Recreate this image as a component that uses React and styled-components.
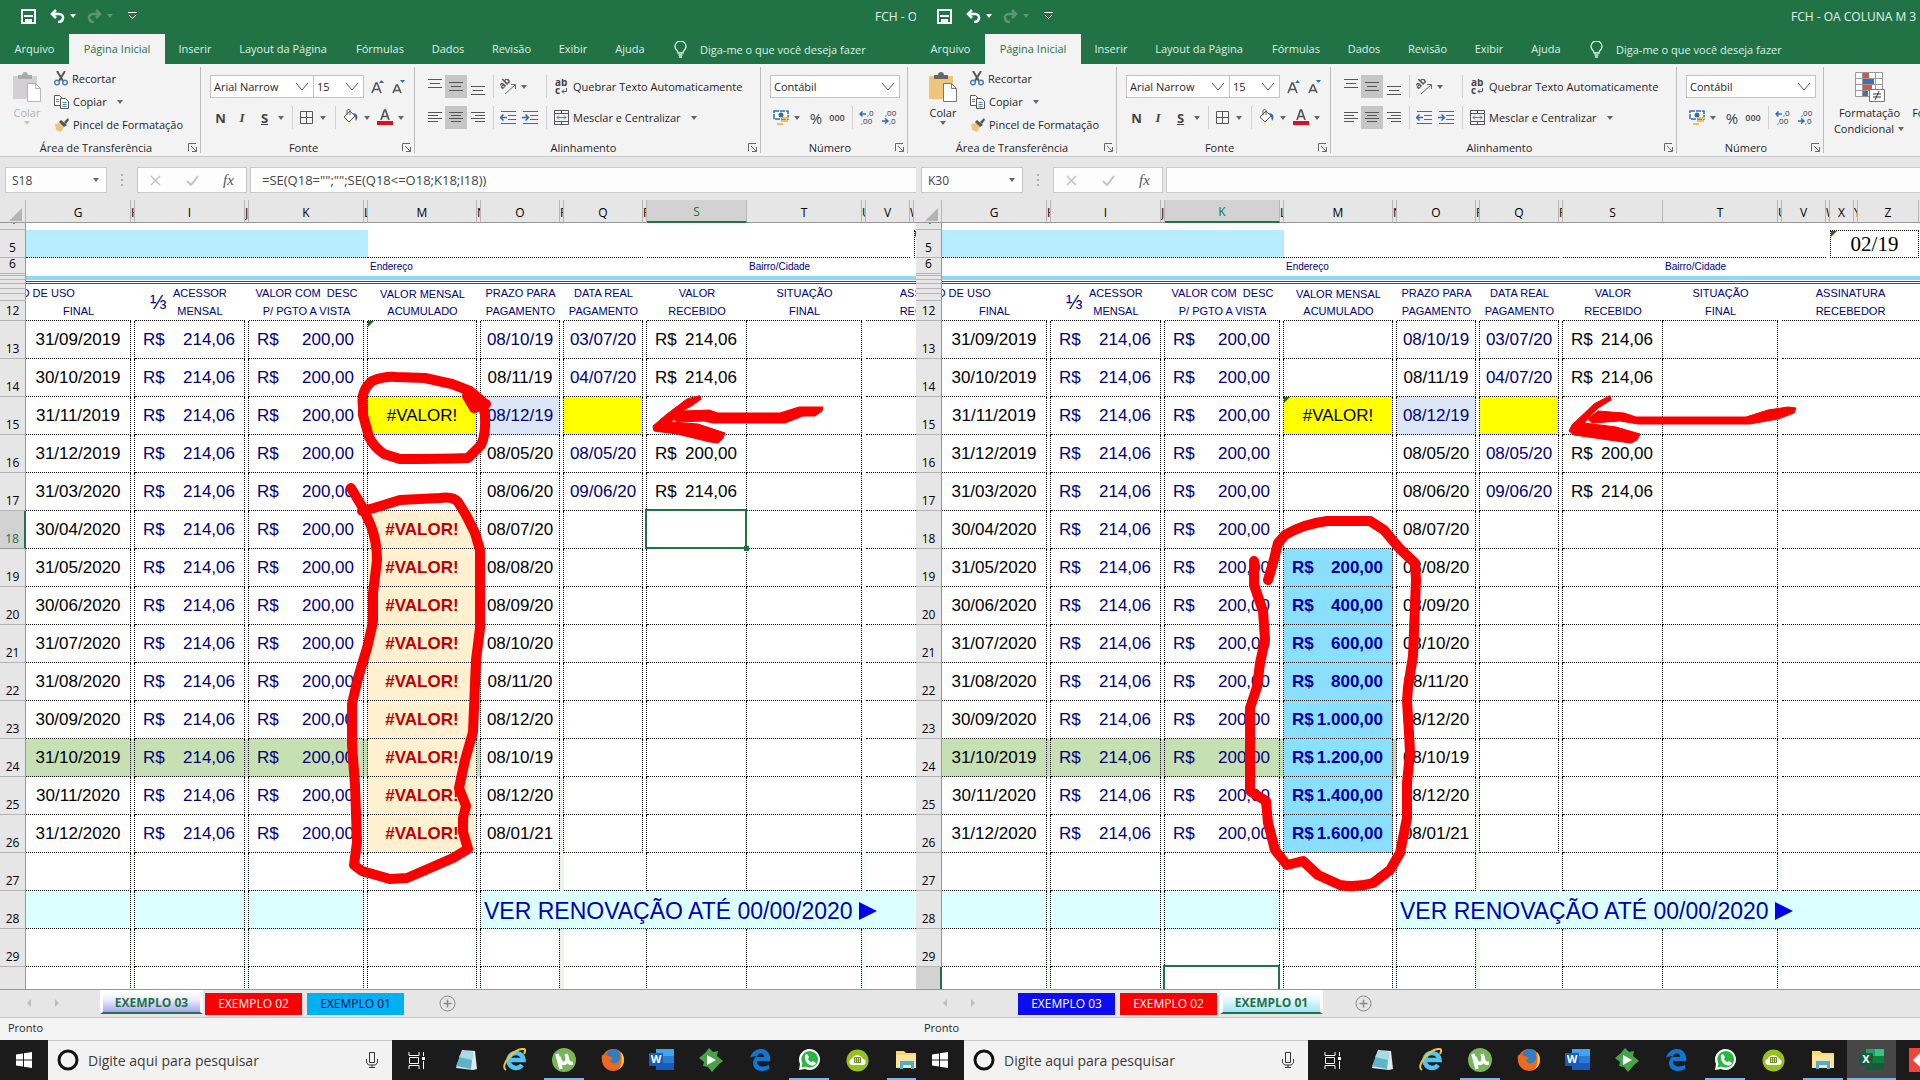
import React from 'react'
import styled, { createGlobalStyle, css } from 'styled-components'

const GlobalStyle = createGlobalStyle`
  * {
    box-sizing: border-box;
  }
  body {
    margin: 0;
    background: #e6e6e6;
    overflow: hidden;
  }
  button, input, select {
    font: inherit;
    color: inherit;
    margin: 0;
    padding: 0;
    border: 0;
    background: none;
    border-radius: 0;
  }
  svg {
    display: block;
    flex: none;
  }
`

const Desktop = styled.div`
  display: grid;
  grid-template-columns: minmax(0, 229fr) minmax(0, 251fr);
  min-height: 100vh;
  font-family: 'Open Sans', 'Noto Sans', sans-serif;
  font-size: 12px;
  color: #262626;
`
const Pane = styled.section`
  position: relative;
  display: flex;
  flex-direction: column;
  overflow: hidden;
  background: #e6e6e6;
`

/* title bar and ribbon tabs */
const TitleBar = styled.header`
  display: flex;
  align-items: center;
  height: 34px;
  padding-bottom: 2px;
  background: #217346;
  color: #e4f3e9;
  white-space: nowrap;
`
const QuickAccess = styled.div`
  display: flex;
  align-items: center;
  flex: none;
  width: 875px;
  padding-left: 21px;
`
const QuickButton = styled.button`
  display: flex;
  align-items: center;
  gap: 5px;
  margin-right: ${p => p.$gap || 10}px;
  opacity: ${p => (p.disabled ? 0.25 : 1)};
  color: #fff;
`
const TabStrip = styled.nav`
  display: flex;
  height: 30px;
  background: #217346;
  color: #dff0e6;
  font-size: 11px;
`
const RibbonTab = styled.button`
  flex: none;
  width: ${p => p.$w}px;
  padding-bottom: 1px;
  background: ${p => (p.$active ? '#f3f3f3' : 'transparent')};
  color: ${p => (p.$active ? '#217346' : '#dff0e6')};
  white-space: nowrap;
`
const TellMe = styled.button`
  display: flex;
  align-items: center;
  flex: none;
  gap: 13px;
  padding-left: 14px;
  color: #dff0e6;
  white-space: nowrap;
`

/* ribbon */
const Ribbon = styled.div`
  display: flex;
  flex: none;
  height: 93px;
  background: #f3f3f3;
  border-bottom: 1px solid #c8c8c8;
  font-size: 11px;
`
const Group = styled.div`
  display: flex;
  flex-direction: column;
  flex: none;
  width: ${p => p.$w}px;
  padding: ${p => (p.$tight ? '3px 0 0' : '11px 0 0 9px')};
  border-right: 1px solid transparent;
  border-image: linear-gradient(#f3f3f3 4px, #bcbcbc 4px, #bcbcbc 88px, #f3f3f3 88px) 1;
`
const GroupLabel = styled.div`
  display: flex;
  align-items: center;
  height: 18px;
  margin-top: auto;
  margin-left: ${p => (p.$tight ? 0 : -9)}px;
  span {
    flex: 1;
    padding-left: 4px;
    text-align: center;
  }
  button {
    margin-right: 3px;
  }
`
const ToolRow = styled.div`
  display: flex;
  align-items: center;
  height: 23px;
  margin-bottom: ${p => (p.$last ? 0 : 8)}px;
`
const Tool = styled.button`
  display: flex;
  align-items: center;
  justify-content: center;
  flex: none;
  width: ${p => p.$w}px;
  height: 23px;
  background: ${p => (p.$on ? '#c6c6c6' : 'transparent')};
  color: #444;
  white-space: nowrap;
`
const Glyph = styled.span`
  font-size: 13px;
  font-weight: 700;
  font-style: ${p => (p.$italic ? 'italic' : 'normal')};
  font-family: ${p => (p.$italic ? "'Liberation Serif', serif" : 'inherit')};
  text-decoration: ${p => (p.$under ? 'underline' : 'none')};
`
const Percent = styled.span`
  font-size: 15px;
`
const Zeros = styled.span`
  font-size: 9px;
  font-weight: 600;
`
const Sep = styled.span`
  display: flex;
  justify-content: center;
  flex: none;
  width: ${p => p.$w}px;
  height: 23px;
  &::before {
    content: '';
    width: 1px;
    background: #d0d0d0;
  }
`
const Space = styled.span`
  flex: none;
  width: ${p => p.$w}px;
`
const TextTool = styled.button`
  display: flex;
  align-items: center;
  gap: 10px;
  padding-left: 1px;
  white-space: nowrap;
`
const SelectBox = styled.label`
  display: grid;
  align-items: center;
  flex: none;
  width: ${p => p.$w}px;
  height: 23px;
  margin-right: ${p => (p.$join ? -1 : 0)}px;
  border: 1px solid #c3c3c3;
  background: #fff;
  select, svg {
    grid-area: 1 / 1;
  }
  select {
    appearance: none;
    width: 100%;
    padding-left: 3px;
  }
  svg {
    justify-self: end;
    margin-right: 3px;
    pointer-events: none;
  }
`
const Clipboard = styled.div`
  display: flex;
`
const BigTool = styled.button`
  display: flex;
  flex-direction: column;
  align-items: center;
  flex: none;
  width: ${p => p.$w}px;
  padding-top: 5px;
  line-height: 16px;
  color: ${p => (p.disabled ? '#b1b1b1' : '#262626')};
  white-space: nowrap;
  svg + span {
    margin-top: 3px;
  }
`
const BigLabel = styled.span`
  display: flex;
  align-items: center;
  gap: 4px;
`
const ClipList = styled.div`
  display: flex;
  flex-direction: column;
  align-items: flex-start;
`
const ClipTool = styled.button`
  display: flex;
  align-items: center;
  gap: 4px;
  height: 23px;
  white-space: nowrap;
`
const StylesGroup = styled.div`
  display: flex;
  padding-top: 3px;
`

/* formula bar */
const FormulaBar = styled.div`
  display: flex;
  flex: none;
  height: 43px;
  padding: 10px 0 7px 5px;
  color: #444;
`
const NameBox = styled.label`
  display: flex;
  align-items: center;
  flex: none;
  width: 102px;
  padding: 0 6px;
  border: 1px solid #c8c8c8;
  background: #fdfdfd;
  input {
    flex: 1;
    min-width: 0;
  }
`
const Dots = styled.span`
  display: flex;
  align-items: center;
  justify-content: center;
  flex: none;
  width: 30px;
`
const FormulaButtons = styled.div`
  display: flex;
  align-items: center;
  justify-content: space-around;
  flex: none;
  width: 110px;
  margin-right: 3px;
  border: 1px solid #c8c8c8;
  background: #fdfdfd;
`
const FormulaInput = styled.input`
  && {
    flex: 1;
    min-width: 0;
    padding-left: 11px;
    border: 1px solid #c8c8c8;
    border-right: 0;
    background: #fdfdfd;
    font-size: 13px;
  }
`
const Fx = styled.em`
  color: #555;
  font: italic 15px 'Liberation Serif', serif;
`

/* worksheet */
const Sheet = styled.div`
  position: relative;
  flex: 1 1 790px;
  overflow: hidden;
  border-bottom: 1px solid #979797;
  background: #fff;
`
const Grid = styled.table`
  width: 1024px;
  table-layout: fixed;
  border-collapse: separate;
  border-spacing: 0;
  font-family: 'Liberation Sans', Arial, sans-serif;
  font-size: 17px;
  line-height: 24px;
  color: #000;
`
const ColHead = styled.th`
  height: 23px;
  padding: 2px 0 0;
  overflow: hidden;
  border-bottom: ${p => (p.$on ? '2px solid #217346' : '1px solid #979797')};
  border-right: 1px solid #b5b5b5;
  background: ${p => (p.$on ? '#d2d2d2' : '#e6e6e6')};
  color: ${p => (p.$on ? '#217346' : '#000')};
  font: 400 12px/19px 'Open Sans', sans-serif;
  text-align: ${p => (p.$gap ? 'left' : 'center')};
  white-space: nowrap;
`
const RowHead = styled.th`
  padding: 0;
  border-bottom: 1px solid ${p => (p.$on ? '#979797' : '#b5b5b5')};
  border-right: ${p => (p.$on ? '2px solid #217346' : '1px solid #979797')};
  background: ${p => (p.$on ? '#d2d2d2' : '#e6e6e6')};
  color: ${p => (p.$on ? '#217346' : '#000')};
  font: 400 12px/18px 'Open Sans', sans-serif;
`
const RowNo = styled.div`
  display: flex;
  align-items: flex-end;
  justify-content: center;
  height: ${p => p.$h}px;
  overflow: hidden;
`
const dotted = '1px dotted #000'
const Cell = styled.td`
  position: relative;
  padding: 0;
  background: ${p => p.$bg || 'transparent'};
  color: ${p => p.$color || '#000'};
  font-weight: ${p => (p.$bold ? 700 : 400)};
  text-align: center;
  white-space: nowrap;
  border-right: ${p => (p.$r ? dotted : 0)};
  border-bottom: ${p => (p.$b ? dotted : 0)};
  ${p => p.$box && css`
    border: ${dotted};
    font: 21px/24px 'Liberation Serif', serif;
  `}
  ${p => p.$flag && css`
    &::before {
      content: '';
      position: absolute;
      top: 0;
      left: 0;
      border-top: 6px solid #1d6b1d;
      border-right: 6px solid transparent;
    }
  `}
  ${p => p.$selected && css`
    &::after {
      content: '';
      position: absolute;
      inset: -2px -1px ${p.$open ? '-30px' : '-1px'} -2px;
      border: 2px solid #217346;
      z-index: 1;
    }
  `}
`
const Handle = styled.i`
  position: absolute;
  right: -3px;
  bottom: -3px;
  z-index: 2;
  width: 5px;
  height: 5px;
  background: #217346;
`
const Money = styled.div`
  display: flex;
  justify-content: space-between;
  padding: 0 9px 0 8px;
`
const HeadCell = styled.td`
  padding: 0;
  overflow: hidden;
  border-bottom: ${p => (p.$b ? dotted : 0)};
  color: #00007c;
  font-size: 11px;
  line-height: ${p => (p.$low ? 17 : 18)}px;
  text-align: center;
  vertical-align: ${p => (p.$low ? 'bottom' : 'top')};
  white-space: pre;
`
const CutLine = styled.div`
  margin-left: -5px;
  text-align: left;
`
const Third = styled.div`
  display: grid;
  grid-template-columns: 30px 1fr;
  align-items: center;
  padding: 0 20px 0 8px;
  > span {
    font-size: 20px;
  }
`
const Note = styled.td`
  padding: 0 0 0 2px;
  color: #00007c;
  font-size: 10px;
  line-height: 15px;
  white-space: nowrap;
`
const Stripe = styled.td`
  padding: 0;
  background: ${p => (p.$blue ? '#8ed8f8' : '#fff')};
  border-bottom: ${p => (p.$red ? '3px double #b01c2e' : 0)};
`
const Renew = styled.a`
  display: flex;
  align-items: center;
  gap: 6px;
  padding: 2px 0 0 3px;
  color: #0000b4;
  font-size: 23px;
  line-height: 32px;
  text-decoration: none;
`
const Ink = styled.svg`
  position: absolute;
  top: 0;
  left: 0;
  z-index: 3;
  pointer-events: none;
`

/* sheet tabs, status, taskbar */
const SheetTabs = styled.div`
  display: flex;
  flex: none;
  height: 28px;
  border-bottom: 1px solid #c6c6c6;
`
const TabArrows = styled.div`
  display: flex;
  align-items: center;
  gap: 22px;
  flex: none;
  width: 100px;
  padding: 0 0 1px 26px;
  color: #bdbdbd;
`
const SheetTab = styled.button`
  flex: none;
  width: ${p => (p.$active ? 103 : 102)}px;
  height: 25px;
  padding-bottom: 1px;
  border: solid #e6e6e6;
  border-width: 3px 3px 0 2px;
  background: ${p => p.$bg};
  background-clip: padding-box;
  color: ${p => p.$color};
  ${p => p.$active && css`
    margin-top: -1px;
    border: solid #fff;
    border-width: 4px 3px 2px;
    border-bottom-color: #217346;
    font-weight: 700;
    background-clip: padding-box;
  `}
`
const AddSheet = styled.button`
  width: 16px;
  margin-left: 32px;
`
const StatusBar = styled.footer`
  flex: none;
  height: 22px;
  padding-left: 8px;
  background: #f3f3f3;
  font-size: 11px;
  line-height: 19px;
`
const Taskbar = styled.div`
  display: flex;
  flex: none;
  height: 40px;
  background: #1b1b1b;
`
const Start = styled.button`
  display: flex;
  align-items: center;
  justify-content: center;
  flex: none;
  width: 48px;
`
const Search = styled.label`
  display: flex;
  align-items: center;
  flex: none;
  width: 344px;
  padding: 0 14px 1px 9px;
  border-top: 1px solid #c8c8c8;
  background: #f2f2f2;
  color: #3b3b3b;
  font-size: 14px;
  input {
    flex: 1;
    min-width: 0;
    padding-left: 9px;
  }
  input::placeholder {
    color: #3b3b3b;
    opacity: 1;
  }
`
const AppButton = styled.button`
  display: flex;
  align-items: center;
  justify-content: center;
  flex: none;
  width: 49px;
  background: ${p => (p.$current ? '#474747' : 'transparent')};
  box-shadow: ${p => (p.$current ? 'inset 0 -2px #7eb4ea' : 'none')};
  ${p => p.$open && css`
    background: linear-gradient(#7eb4ea, #7eb4ea) center bottom / 40px 2px no-repeat;
  `}
`

const Caret = ({ color = '#666' }) => (
  <svg width="7" height="4"><path d="M0 0h6L3 4z" fill={color} /></svg>
)
const Chevron = () => (
  <svg width="15" height="9" fill="none" stroke="#555"><path d="M1 1l6 7 6-7" /></svg>
)
const Launcher = () => (
  <svg width="9" height="9" fill="none" stroke="#666">
    <path d="M.5 8V.5H8M3 3l5 5M8.500 4v4.500H4" />
  </svg>
)
const Lines = ({ rows }) => (
  <svg width="14" height="16" stroke="#555">
    {rows.map(([x, w, y]) => <path key={y} d={`M${x} ${y}.5h${w}`} />)}
  </svg>
)
const Indent = ({ flip }) => (
  <svg width="17" height="14" stroke="#666" fill="none">
    <path d="M1 .5h15M8 4.500h8M8 8.500h8M1 12.500h15" />
    <path
      d={flip ? 'M0 6.500h6M3.500 3.500l3 3-3 3' : 'M1 6.500h6M3.500 3.500l-3 3 3 3'}
      stroke="#2e6db4"
      strokeWidth="1.500"
    />
  </svg>
)
const PasteIcon = ({ off }) => (
  <svg width="29" height="30">
    <path d="M0 4h24v23H0z" fill={off ? '#d3d0d3' : '#efc57b'} />
    <path d="M5 7V3h4c0-4 6-4 6 0h4v4z" fill={off ? '#aaa' : '#666'} />
    <path d="M14.500 11.500h8l5 5v13h-13z" fill="#fff" stroke={off ? '#b5b5b5' : '#777'} />
    <path d="M22.500 11.500v5h5" fill="none" stroke={off ? '#b5b5b5' : '#777'} />
  </svg>
)
const CutIcon = () => (
  <svg width="14" height="15" fill="none" strokeWidth="1.500">
    <path d="M3 0l6 10M11 0L5 10" stroke="#555" strokeWidth="2" />
    <circle cx="3" cy="11.500" r="2.300" stroke="#4a7fbf" />
    <circle cx="11" cy="11.500" r="2.300" stroke="#4a7fbf" />
  </svg>
)
const CopyIcon = () => (
  <svg width="15" height="14" fill="#fff" stroke="#555">
    <path d="M.5.5h5l3 3v7h-8z" />
    <path d="M6.500 3.500h5l3 3v7h-8z" />
    <path d="M2 4.500h3M2 6.500h3M8.500 7.500h4M8.500 9.500h4M8.500 11.500h4" stroke="#4a7fbf" />
  </svg>
)
const BrushIcon = () => (
  <svg width="15" height="14">
    <path d="M1 6l5-1 4 4-3 5-5-2z" fill="#efc57b" />
    <path d="M5 4l2-2 6 5-3 2z" fill="#555" />
    <path d="M10 4l4-4 1 2-3 4z" fill="#555" />
  </svg>
)
const GrowFont = ({ down }) => (
  <svg width="14" height="14">
    <path
      d={down ? 'M1 13L4.500 5h1L9 13M2.500 10.500h5' : 'M1 13L5 3h1l4 10M2.500 9.500h6'}
      fill="none"
      stroke="#555"
      strokeWidth="1.600"
    />
    <path d={down ? 'M8 0h5l-2.500 3z' : 'M8 3h5L10.500 0z'} fill="#2e6db4" />
  </svg>
)
const BordersIcon = () => (
  <svg width="14" height="14" fill="none" stroke="#555"><path d="M.5.5h12v12H.5zM6.500 0v13M0 6.500h13" /></svg>
)
const BucketIcon = () => (
  <svg width="16" height="17">
    <path d="M1 8l6-6 5 5-6 6zM4 6V2c0-2 3-2 3 0v4" fill="#fff" stroke="#555" />
    <path d="M10 4c4 0 6 4 3 8-1-3 0-5-3-8z" fill="#2e6db4" />
    <path d="M1 14h12v3H1z" fill="#fdf3c4" />
  </svg>
)
const FontColorIcon = () => (
  <svg width="16" height="17">
    <path d="M4 11L7.500 1h1L12 11M5.500 7.500h5" fill="none" stroke="#555" strokeWidth="1.700" />
    <path d="M0 12h16v4H0z" fill="#d6121f" />
  </svg>
)
const AngleIcon = () => (
  <svg width="17" height="16">
    <text x="1" y="8" fontSize="10" fontWeight="700" fill="#555" transform="rotate(-45 5 8)">ab</text>
    <path d="M5 15l10-9M11 5.500h4.500V10" fill="none" stroke="#666" />
  </svg>
)
const WrapIcon = () => (
  <svg width="13" height="16" fill="#444">
    <text x="0" y="7" fontSize="10" fontWeight="700">ab</text>
    <text x="0" y="15" fontSize="10" fontWeight="700">c</text>
    <path d="M11.500 9v3.500H7M9 10.500l-2 2 2 2" fill="none" stroke="#555" />
  </svg>
)
const MergeIcon = () => (
  <svg width="15" height="15" fill="none" stroke="#555">
    <path d="M.5.5h14v14H.5zM0 3.500h15M0 11.500h15M7.500 0v3.500M7.500 11.500V15" />
    <path d="M3 7.500h9M5 5.500l-2 2 2 2M10 5.500l2 2-2 2" stroke="#4a7fbf" />
  </svg>
)
const CurrencyIcon = () => (
  <svg width="17" height="16">
    <path d="M1 1h14v8H1z" fill="#fff" stroke="#2e6db4" strokeWidth="1.500" strokeDasharray="5 1" />
    <circle cx="8" cy="5" r="2.500" fill="#2e6db4" />
    <path d="M9 7h7v2H9zM8 10h7v2H8zM4 13h6v2H4z" fill="#f0bd62" />
  </svg>
)
const DecimalIcon = ({ less }) => (
  <svg width="15" height="15" fill="#333">
    <text x={less ? 3 : 8} y="6" fontSize="8">{less ? ',00' : ',0'}</text>
    <text x={less ? 7 : 2} y="14" fontSize="8">{less ? ',0' : ',00'}</text>
    <path
      d={less ? 'M0 11h6M3 8.500L6 11l-3 2.500' : 'M1 4h6M3.500 1.500L1 4l2.500 2.500'}
      fill="none"
      stroke="#2e6db4"
      strokeWidth="1.500"
    />
  </svg>
)
const CondIcon = () => (
  <svg width="30" height="30">
    <path d="M.5.5h27v24H.5z" fill="#fff" />
    <path d="M8 1h6v6H8zM8 13h9v6H8z" fill="#d65545" />
    <path d="M8 7h11v6H8zM8 19h5v6H8z" fill="#3f6fb5" />
    <path d="M.5.5h27v24H.5zM0 6.500h28M0 12.500h28M0 18.500h28M7.500 0v25M20.500 0v25" fill="none" stroke="#999" />
    <path d="M14.500 17.500h15v12h-15z" fill="#fff" stroke="#777" />
    <path d="M18 22h8M18 25h8M24 19l-4 9" stroke="#333" />
  </svg>
)

const Letter = ({ bg, children }) => (
  <svg width="25" height="24">
    <path d="M7 1h18v21H7z" fill={bg[0]} />
    <path d="M7 8h18v7H7z" fill={bg[1]} />
    <path d="M7 15h18v7H7z" fill={bg[2]} />
    {bg[3] && <path d="M16 1h9v7h-9z" fill={bg[3]} />}
    <rect x="0" y="5" width="14" height="13" rx="1" fill={bg[2]} />
    <text x="7" y="15" fontSize="11" fontWeight="700" fill="#fff" textAnchor="middle">{children}</text>
  </svg>
)

const apps = [
  { name: 'Visão de tarefas', icon: (
    <svg width="18" height="17" fill="none" stroke="#fff">
      <path d="M1 0v3.500h10V0M1 17v-3.500h10V17M1.500 5.500h9v6h-9zM15.500 0v4M15.500 9v8" />
      <path d="M14 5h3v3h-3z" fill="#fff" stroke="none" />
    </svg>
  ) },
  { name: 'Bloco de Notas', icon: (
    <svg width="24" height="24">
      <path d="M8 2l13 1 2 18-4 1-17-2z" fill="#dfe9ea" />
      <path d="M8 3l11 1-2 17-15-3z" fill="#5fb3c8" />
      <path d="M8 3l11 1-1 8L5 9z" fill="#a5dbe4" />
    </svg>
  ) },
  { name: 'Internet Explorer', icon: (
    <svg width="26" height="24" fill="none">
      <path d="M20 17a7.500 7.500 0 1 1 1.500-5H8" stroke="#54c3f1" strokeWidth="4.500" />
      <path d="M4 22C-3 18 12 0 22 1c2 1 1 3 0 5" stroke="#f3c433" strokeWidth="2" />
    </svg>
  ) },
  { name: 'uTorrent', open: true, icon: (
    <svg width="24" height="24">
      <circle cx="12" cy="12" r="12" fill="#78b558" />
      <path d="M5 6l4 15M7 9c2 9 9 8 8 0l-1-3M15 9c1 5 2 7 6 6" stroke="#fff" strokeWidth="3.500" fill="none" />
    </svg>
  ) },
  { name: 'Firefox', icon: (
    <svg width="24" height="24">
      <circle cx="12" cy="12" r="11" fill="#e9611d" />
      <circle cx="13" cy="9" r="8" fill="#2f7fc4" />
      <path d="M1 7c2 1 5 0 7 1l4 2-3 3c2 4 8 3 10-2 1-4-1-7-3-9 9 4 9 15 2 19-10 5-19-4-17-14z" fill="#ec6a1f" />
      <path d="M20 4c5 6 3 14-2 17 3-5 3-10 2-17z" fill="#fbc93c" />
    </svg>
  ) },
  { name: 'Word', icon: <Letter bg={['#41a5ee', '#2b7cd3', '#185abd']}>W</Letter> },
  { name: 'Reprodutor', icon: (
    <svg width="24" height="24">
      <path d="M10 0l4 4 5-1-1 5 6 5-5 4-6 7-4-5-5-1 1-4-5-4 6-5z" fill="#47a34a" />
      <path d="M8 7l9 5-9 5z" fill="#fff" />
    </svg>
  ) },
  { name: 'Edge', icon: (
    <svg width="22" height="22">
      <path d="M1 9C3 2 8 0 12 0c7 0 10 6 9 12H8c0 7 8 6 12 4v4c-7 4-16 2-16-6 0-3 2-6 4-7-4 0-6 1-7 2zm7-1h7c0-5-6-5-7 0z" fill="#0b78d6" />
    </svg>
  ) },
  { name: 'WhatsApp', open: true, icon: (
    <svg width="22" height="22">
      <path d="M1 21l1-6A10.500 10.500 0 1 1 7 20z" fill="#fff" />
      <path d="M3.500 18.500l1-4a8.300 8.300 0 1 1 3 3z" fill="#25b83f" />
      <path d="M7 6l2-1 2 3-1 2c1 2 2 3 4 3l1-1 3 2c-1 3-4 3-6 2-3-1-6-5-5-10z" fill="#fff" />
    </svg>
  ) },
  { name: 'Filmes', icon: (
    <svg width="23" height="23">
      <circle cx="11.500" cy="11.500" r="11" fill="#97c11f" />
      <path d="M6 16c-4-1-3-6 0-6 1-5 9-5 11 0 4 1 3 6 0 6z" fill="#fff" />
      <path d="M8.500 8.500h6v5h-6zM8 11h7M10.500 8v6M12.500 8v6" fill="none" stroke="#6b8e12" />
    </svg>
  ) },
  { name: 'Explorador de Arquivos', open: true, icon: (
    <svg width="22" height="20">
      <path d="M0 1h8l2 2h12v15H0z" fill="#f7d774" />
      <path d="M0 5h22v13H0z" fill="#fde69b" />
      <path d="M4 19v-8h14v8h-3v-4H7v4z" fill="#4badd8" />
    </svg>
  ) },
  { name: 'Excel', current: true, icon: <Letter bg={['#21a366', '#107c41', '#185c37', '#33c481']}>X</Letter> },
  { name: 'AnyDesk', icon: (
    <svg width="24" height="24">
      <path d="M0 0h24v24H0z" fill="#ef443b" />
      <path d="M4 12l7-7 7 7-7 7z" fill="#fff" />
    </svg>
  ) },
]

const ribbonTabs = [
  ['Arquivo', 69],
  ['Página Inicial', 96],
  ['Inserir', 60],
  ['Layout da Página', 116],
  ['Fórmulas', 78],
  ['Dados', 58],
  ['Revisão', 69],
  ['Exibir', 54],
  ['Ajuda', 60],
]

const columns = [
  ['G', 105], ['H', 4], ['I', 110], ['J', 4], ['K', 115], ['L', 4], ['M', 109],
  ['N', 4], ['O', 79], ['P', 4], ['Q', 79], ['R', 4], ['S', 100], ['T', 115],
  ['U', 4], ['V', 44], ['W', 4], ['X', 24], ['Y', 4], ['Z', 61], ['AA', 21],
]

const NAVY = '#00007c'
const GREEN = '#c6e0b4'
const AQUA = '#dcffff'

// [row, final date, deadline, real date, received]
const payments = [
  [13, '31/09/2019', '08/10/19', '03/07/20', '214,06'],
  [14, '30/10/2019', '08/11/19', '04/07/20', '214,06'],
  [15, '31/11/2019', '08/12/19', '', ''],
  [16, '31/12/2019', '08/05/20', '08/05/20', '200,00'],
  [17, '31/03/2020', '08/06/20', '09/06/20', '214,06'],
  [18, '30/04/2020', '08/07/20'],
  [19, '31/05/2020', '08/08/20'],
  [20, '30/06/2020', '08/09/20'],
  [21, '31/07/2020', '08/10/20'],
  [22, '31/08/2020', '08/11/20'],
  [23, '30/09/2020', '08/12/20'],
  [24, '31/10/2019', '08/10/19'],
  [25, '30/11/2020', '08/12/20'],
  [26, '31/12/2020', '08/01/21'],
]

const books = [
  {
    id: 'a',
    cell: 'S18',
    formula: '=SE(Q18="";"";SE(Q18<=O18;K18;I18))',
    pasteOff: true,
    flag: 13,
    accumulated: row => (row >= 18 ? '#VALOR!' : ''),
    tabs: [
      ['EXEMPLO 03', 'linear-gradient(#fff, #e9e9fc 40%, #a3a3f2)', '#217346', true],
      ['EXEMPLO 02', '#fb0000', '#fff'],
      ['EXEMPLO 01', '#00b0f0', '#00005a'],
    ],
  },
  {
    id: 'b',
    cell: 'K30',
    formula: '',
    flag: 15,
    accumulated: row => (row >= 19 ? ((row - 18) * 200).toLocaleString('de-DE') + ',00' : ''),
    tabs: [
      ['EXEMPLO 03', '#0c0cf0', '#fff'],
      ['EXEMPLO 02', '#fb0000', '#fff'],
      ['EXEMPLO 01', 'linear-gradient(#fff, #e2f7fd 40%, #9fe2f7)', '#217346', true],
    ],
  },
]

function RibbonBar({ book }) {
  const b = book.id
  return (
    <Ribbon>
      <Group $w={201} $tight>
        <Clipboard>
          <BigTool $w={54} disabled={book.pasteOff}>
            <PasteIcon off={book.pasteOff} />
            <BigLabel>Colar</BigLabel>
            <Caret color={book.pasteOff ? '#c5c5c5' : '#666'} />
          </BigTool>
          <ClipList>
            <ClipTool><CutIcon />Recortar</ClipTool>
            <ClipTool><CopyIcon />Copiar<Space $w={2} /><Caret /></ClipTool>
            <ClipTool><BrushIcon />Pincel de Formatação</ClipTool>
          </ClipList>
        </Clipboard>
        <GroupLabel $tight><span>Área de Transferência</span><button aria-label="Mais"><Launcher /></button></GroupLabel>
      </Group>
      <Group $w={214}>
        <ToolRow>
          <SelectBox $w={104} $join htmlFor={`font-${b}`}>
            <select id={`font-${b}`} aria-label="Fonte"><option>Arial Narrow</option></select>
            <Chevron />
          </SelectBox>
          <SelectBox $w={51} htmlFor={`size-${b}`}>
            <select id={`size-${b}`} aria-label="Tamanho"><option>15</option></select>
            <Chevron />
          </SelectBox>
          <Space $w={4} />
          <Tool $w={20}><GrowFont /></Tool>
          <Tool $w={22}><GrowFont down /></Tool>
        </ToolRow>
        <ToolRow $last>
          <Tool $w={21}><Glyph>N</Glyph></Tool>
          <Tool $w={22}><Glyph $italic>I</Glyph></Tool>
          <Tool $w={23}><Glyph $under>S</Glyph></Tool>
          <Tool $w={11}><Caret /></Tool>
          <Sep $w={10} />
          <Tool $w={20}><BordersIcon /></Tool>
          <Tool $w={13}><Caret /></Tool>
          <Sep $w={10} />
          <Tool $w={22}><BucketIcon /></Tool>
          <Tool $w={11}><Caret /></Tool>
          <Tool $w={24}><FontColorIcon /></Tool>
          <Tool $w={9}><Caret /></Tool>
        </ToolRow>
        <GroupLabel><span>Fonte</span><button aria-label="Mais"><Launcher /></button></GroupLabel>
      </Group>
      <Group $w={346}>
        <ToolRow>
          <Tool $w={21}><Lines rows={[[0, 14, 0], [2, 10, 4], [0, 14, 8]]} /></Tool>
          <Tool $w={22} $on><Lines rows={[[0, 14, 3], [2, 10, 7], [0, 14, 11]]} /></Tool>
          <Tool $w={22}><Lines rows={[[0, 14, 7], [2, 10, 11], [0, 14, 15]]} /></Tool>
          <Sep $w={8} />
          <Tool $w={22}><AngleIcon /></Tool>
          <Tool $w={10}><Caret /></Tool>
          <Space $w={12} />
          <Sep $w={10} />
          <Tool $w={21}><WrapIcon /></Tool>
          <TextTool>Quebrar Texto Automaticamente</TextTool>
        </ToolRow>
        <ToolRow $last>
          <Tool $w={21}><Lines rows={[[0, 14, 2], [0, 10, 5], [0, 14, 8], [0, 10, 11]]} /></Tool>
          <Tool $w={22} $on><Lines rows={[[0, 14, 2], [2, 10, 5], [0, 14, 8], [2, 10, 11]]} /></Tool>
          <Tool $w={22}><Lines rows={[[0, 14, 2], [4, 10, 5], [0, 14, 8], [4, 10, 11]]} /></Tool>
          <Sep $w={8} />
          <Tool $w={22}><Indent /></Tool>
          <Tool $w={22}><Indent flip /></Tool>
          <Sep $w={10} />
          <Tool $w={21}><MergeIcon /></Tool>
          <TextTool>Mesclar e Centralizar<Caret /></TextTool>
        </ToolRow>
        <GroupLabel><span>Alinhamento</span><button aria-label="Mais"><Launcher /></button></GroupLabel>
      </Group>
      <Group $w={147}>
        <ToolRow>
          <SelectBox $w={130} htmlFor={`format-${b}`}>
            <select id={`format-${b}`} aria-label="Formato"><option>Contábil</option></select>
            <Chevron />
          </SelectBox>
        </ToolRow>
        <ToolRow $last>
          <Tool $w={22}><CurrencyIcon /></Tool>
          <Tool $w={11}><Caret /></Tool>
          <Tool $w={26}><Percent>%</Percent></Tool>
          <Tool $w={16}><Zeros>000</Zeros></Tool>
          <Sep $w={14} />
          <Tool $w={15}><DecimalIcon /></Tool>
          <Space $w={8} />
          <Tool $w={15}><DecimalIcon less /></Tool>
        </ToolRow>
        <GroupLabel><span>Número</span><button aria-label="Mais"><Launcher /></button></GroupLabel>
      </Group>
      <StylesGroup>
        <BigTool $w={91}>
          <CondIcon />
          <BigLabel>Formatação</BigLabel>
          <BigLabel>Condicional<Caret /></BigLabel>
        </BigTool>
        <BigTool $w={42}>
          <CondIcon />
          <BigLabel>Formatar</BigLabel>
        </BigTool>
      </StylesGroup>
    </Ribbon>
  )
}

const amount = value => <Money><span>R$</span><span>{value}</span></Money>

function PaymentRow({ book, data }) {
  const [row, end, due, paid, received] = data
  const band = row === 24 ? GREEN : undefined
  const late = row === 15
  const total = book.accumulated(row)
  const isError = total === '#VALOR!'
  const selected = book.cell === `S${row}`
  let totalBg
  if (late) totalBg = '#ffff00'
  else if (total) totalBg = isError ? '#fff0cf' : '#8adfff'
  const tint = row > 24 ? '#edf3e8' : undefined
  return (
    <tr>
      <RowHead $on={selected}><RowNo $h={37}>{row}</RowNo></RowHead>
      <Cell $r $b $bg={band}>{end}</Cell>
      <Cell $r $bg={band} />
      <Cell $r $b $bg={band} $color={NAVY}>{amount('214,06')}</Cell>
      <Cell $r $bg={band} />
      <Cell $r $b $bg={band} $color={NAVY}>{amount('200,00')}</Cell>
      <Cell $r $bg={band} />
      <Cell
        $r
        $b
        $bg={totalBg}
        $bold={Boolean(total)}
        $color={isError ? '#c00000' : total ? '#0000a8' : '#000'}
        $flag={book.flag === row}
      >
        {late ? '#VALOR!' : isError ? total : total && amount(total)}
      </Cell>
      <Cell $r $bg={band} />
      <Cell $r $b $bg={late ? '#dbe7f6' : undefined} $color={row === 13 || late ? NAVY : '#000'}>{due}</Cell>
      <Cell $r $bg={tint} />
      <Cell $r $b $bg={late ? '#ffff00' : undefined} $color={NAVY}>{paid}</Cell>
      <Cell $r />
      <Cell $r $b $selected={selected}>
        {received && amount(received)}
        {selected && <Handle />}
      </Cell>
      <Cell $r $b />
      <Cell />
      <Cell $b colSpan={6} />
    </tr>
  )
}

function BlankRow({ book, row, height = 37 }) {
  const selected = book.cell === `K${row}`
  const open = row === 30
  return (
    <tr>
      <RowHead $on={selected}><RowNo $h={height}>{open ? '' : row}</RowNo></RowHead>
      <Cell $r $b />
      <Cell $r $bg="#f1f8ea" />
      <Cell $r $b />
      <Cell $r $bg="#e8fcfc" />
      <Cell $r $b $selected={selected} $open />
      <Cell $r />
      <Cell $r $b />
      <Cell $r $bg="#e8fcfc" />
      <Cell $r $b />
      <Cell $bg="#edf3e8" />
      <Cell $b />
      <Cell $r />
      <Cell $r $b />
      <Cell $r $b />
      <Cell $bg="#f2fdfb" />
      <Cell $b colSpan={6} />
    </tr>
  )
}

function Worksheet({ book }) {
  const onCol = book.cell[0]
  return (
    <Grid>
      <colgroup>
        <col width="26" />
        {columns.map(([name, w]) => <col key={name} width={w} />)}
      </colgroup>
      <thead>
        <tr>
          <ColHead>
            <svg width="25" height="19"><path d="M22 5v13H9z" fill="#b4b4b4" /></svg>
          </ColHead>
          {columns.map(([name, w]) => (
            <ColHead key={name} $on={name === onCol} $gap={w < 5}>{name}</ColHead>
          ))}
        </tr>
      </thead>
      <tbody>
        <tr>
          <RowHead><RowNo $h={6}>4</RowNo></RowHead>
          <Cell colSpan={21} />
        </tr>
        <tr>
          <RowHead><RowNo $h={27}>5</RowNo></RowHead>
          <Cell $b colSpan={6} $bg="#b7ecfe" />
          <Cell $b colSpan={5} />
          <Cell />
          <Cell $b colSpan={4} />
          <Cell />
          <Cell $box $flag colSpan={3}>02/19</Cell>
          <Cell />
        </tr>
        <tr>
          <RowHead><RowNo $h={15}>6</RowNo></RowHead>
          <Note colSpan={6} />
          <Note colSpan={7}>Endereço</Note>
          <Note colSpan={8}>Bairro/Cidade</Note>
        </tr>
        <tr>
          <RowHead><RowNo $h={1} /></RowHead>
          <Stripe colSpan={21} />
        </tr>
        <tr>
          <RowHead><RowNo $h={3} /></RowHead>
          <Stripe $blue colSpan={21} />
        </tr>
        <tr>
          <RowHead><RowNo $h={3} /></RowHead>
          <Stripe $red colSpan={21} />
        </tr>
        <tr>
          <RowHead><RowNo $h={4} /></RowHead>
          <HeadCell $b rowSpan={4}><CutLine>O DE USO</CutLine>FINAL</HeadCell>
          <HeadCell rowSpan={4} />
          <HeadCell $b rowSpan={4}>
            <Third><span>⅓</span><div>ACESSOR<br />MENSAL</div></Third>
          </HeadCell>
          <HeadCell rowSpan={4} />
          <HeadCell $b rowSpan={4}>VALOR COM  DESC<br />P/ PGTO A VISTA</HeadCell>
          <HeadCell rowSpan={4} />
          <HeadCell $b $low rowSpan={4}>VALOR MENSAL<br />ACUMULADO</HeadCell>
          <HeadCell rowSpan={4} />
          <HeadCell $b rowSpan={4}>PRAZO PARA<br />PAGAMENTO</HeadCell>
          <HeadCell rowSpan={4} />
          <HeadCell $b rowSpan={4}>DATA REAL<br />PAGAMENTO</HeadCell>
          <HeadCell rowSpan={4} />
          <HeadCell $b rowSpan={4}>VALOR<br />RECEBIDO</HeadCell>
          <HeadCell $b rowSpan={4}>SITUAÇÃO<br />FINAL</HeadCell>
          <HeadCell rowSpan={4} />
          <HeadCell $b rowSpan={4} colSpan={5}>ASSINATURA<br />RECEBEDOR</HeadCell>
          <HeadCell rowSpan={4} />
        </tr>
        <tr><RowHead><RowNo $h={4} /></RowHead></tr>
        <tr><RowHead><RowNo $h={6} /></RowHead></tr>
        <tr><RowHead><RowNo $h={19}>12</RowNo></RowHead></tr>
        {payments.map(data => <PaymentRow key={data[0]} book={book} data={data} />)}
        <BlankRow book={book} row={27} />
        <tr>
          <RowHead><RowNo $h={37}>28</RowNo></RowHead>
          <Cell $r $b $bg={AQUA} />
          <Cell $r $bg={AQUA} />
          <Cell $r $b $bg={AQUA} />
          <Cell $r $bg={AQUA} />
          <Cell $r $b $bg={AQUA} />
          <Cell $r />
          <Cell $r $b />
          <Cell $r />
          <Cell $b $bg={AQUA} colSpan={13}>
            <Renew href="#renovacao">
              VER RENOVAÇÃO ATÉ 00/00/2020
              <svg width="19" height="18"><path d="M0 0v18l18-9z" fill="#0000f0" /></svg>
            </Renew>
          </Cell>
        </tr>
        <BlankRow book={book} row={29} />
        <BlankRow book={book} row={30} height={38} />
      </tbody>
    </Grid>
  )
}

// hand drawn marks, in worksheet pixels
const InkA = () => (
  <Ink width="916" height="790" fill="none" stroke="#fb0000" strokeWidth="10" strokeLinejoin="round" strokeLinecap="round">
    <path d="M363 206C361 195 364 188 372 181Q384 176 396 177L425 178L452 184L470 191L482 201L485 215Q486 235 481 245L468 258Q440 259 400 259L384 254Q374 247 369 237L363 215Z" />
    <path d="M467 196L486 204L474 208z" />
    <path d="M351 288L363 308L371 326Q377 342 377 360L373 393V422L367 448L358 478L352 504V545L355 585L357 642L354 665L362 671L390 679L407 678L437 665L453 658L468 649L463 632V618L466 606L459 588L465 560L473 532L476 460L480 428V350L475 333L466 315L458 302Q453 296 440 298L400 300L374 308L362 311" />
    <path
      transform="translate(0 23)"
      fill="#fb0000"
      strokeWidth="1"
      d="M674 196L683 188L709 187L718 190H780L799 184H823L822 188L815 193H803L785 200H713L704 198L677 199ZM700 173L701 176L693 182L684 187L671 199L698 201L725 210L723 215L718 220L710 219L677 211L654 208L653 203L667 191L687 176Z"
    />
  </Ink>
)
const InkB = () => (
  <Ink width="1004" height="790" fill="none" stroke="#fb0000" strokeWidth="10" strokeLinejoin="round" strokeLinecap="round">
    <g transform="translate(0 23)">
      <path d="M352 357L357 340L362 320L369 312Q387 301 411 298H454L468 307L484 326L499 340L500 357L497 433L492 464L491 478L493 510L494 530L491 560V595L484 630L474 647L457 660Q440 665 424 662L402 652L387 638L371 642L359 627L352 600L350 578L334 568V485L341 464L344 440L349 417L347 388L338 362V338" />
      <path
        fill="#fb0000"
        strokeWidth="1"
        d="M672 196L682 188L708 190L720 194H830L852 187L872 184L880 185L878 190L862 196L834 201H722L704 198L676 200ZM694 173L695 177L682 185L668 200L700 204L724 211L721 217L715 220L700 218L658 212L653 208L656 202L678 181Z"
      />
    </g>
  </Ink>
)

function ExcelPane({ book }) {
  return (
    <Pane>
      <TitleBar>
        <QuickAccess>
          <QuickButton $gap={14} aria-label="Salvar">
            <svg width="15" height="15" fill="none" stroke="#fff" strokeWidth="2">
              <path d="M1 1h13v13H1zM3 7h9" />
              <path d="M4 10h7v4H4z" fill="#fff" stroke="none" />
            </svg>
          </QuickButton>
          <QuickButton aria-label="Desfazer">
            <svg width="15" height="14" fill="none" stroke="#fff" strokeWidth="2.500">
              <path d="M6 1L2 5l4 4M2 5h7c6 0 5 8-1 8" />
            </svg>
            <Caret color="#fff" />
          </QuickButton>
          <QuickButton $gap={14} disabled aria-label="Refazer">
            <svg width="15" height="14" fill="none" stroke="#fff" strokeWidth="2.500">
              <path d="M9 1l4 4-4 4M13 5H6c-6 0-5 8 1 8" />
            </svg>
            <Caret color="#fff" />
          </QuickButton>
          <QuickButton aria-label="Personalizar">
            <svg width="9" height="8" fill="none" stroke="#fff"><path d="M0 .5h9M1 3l3.500 3.500L8 3" /></svg>
          </QuickButton>
        </QuickAccess>
        <span>FCH - OA COLUNA M 3</span>
      </TitleBar>
      <TabStrip>
        {ribbonTabs.map(([label, w], i) => (
          <RibbonTab key={label} $w={w} $active={i === 1}>{label}</RibbonTab>
        ))}
        <TellMe>
          <svg width="13" height="17" fill="none" stroke="#dff0e6" strokeWidth="1.300">
            <path d="M4 12c0-3-3-3-3-6.500a5.300 5.300 0 0 1 11 0C12 9 9 9 9 12zM4.500 14h4M5 16h3" />
          </svg>
          Diga-me o que você deseja fazer
        </TellMe>
      </TabStrip>
      <RibbonBar book={book} />
      <FormulaBar>
        <NameBox htmlFor={`name-${book.id}`}>
          <input id={`name-${book.id}`} aria-label="Caixa de nome" defaultValue={book.cell} />
          <Caret />
        </NameBox>
        <Dots>
          <svg width="2" height="12" fill="#aaa"><path d="M0 0h2v2H0zM0 5h2v2H0zM0 10h2v2H0z" /></svg>
        </Dots>
        <FormulaButtons>
          <svg width="11" height="11" stroke="#c3c3c3" strokeWidth="1.500"><path d="M1 1l9 9M10 1l-9 9" /></svg>
          <svg width="13" height="11" fill="none" stroke="#c3c3c3" strokeWidth="2"><path d="M1 6l4 4 7-9" /></svg>
          <Fx>fx</Fx>
        </FormulaButtons>
        <FormulaInput aria-label="Barra de fórmulas" defaultValue={book.formula} />
      </FormulaBar>
      <Sheet>
        <Worksheet book={book} />
        {book.id === 'a' ? <InkA /> : <InkB />}
      </Sheet>
      <SheetTabs>
        <TabArrows>
          <svg width="6" height="8"><path d="M5 0v8L1 4z" fill="#bdbdbd" /></svg>
          <svg width="6" height="8"><path d="M1 0v8l4-4z" fill="#bdbdbd" /></svg>
        </TabArrows>
        {book.tabs.map(([label, bg, color, active]) => (
          <SheetTab key={label} $bg={bg} $color={color} $active={active}>{label}</SheetTab>
        ))}
        <AddSheet aria-label="Nova planilha">
          <svg width="17" height="17" fill="none" stroke="#888">
            <circle cx="8.500" cy="8.500" r="7.500" />
            <path d="M8.500 4.500v8M4.500 8.500h8" strokeWidth="1.500" />
          </svg>
        </AddSheet>
      </SheetTabs>
      <StatusBar>Pronto</StatusBar>
      <Taskbar>
        <Start aria-label="Iniciar">
          <svg width="16" height="16" fill="#fff">
            <path d="M0 2.500l7-1v6H0zM8 1.300L16 0v7.500H8zM0 8.500h7v6l-7-1zM8 8.500h8V16l-8-1.300z" />
          </svg>
        </Start>
        <Search htmlFor={`search-${book.id}`}>
          <svg width="22" height="22" fill="none" stroke="#111" strokeWidth="3"><circle cx="11" cy="11" r="9" /></svg>
          <input id={`search-${book.id}`} placeholder="Digite aqui para pesquisar" />
          <svg width="12" height="16" fill="none" stroke="#333">
            <path d="M3.500.5h5v10h-5zM.5 7v3.500l2 2.500h7l2-2.500V7M6 13v3M3 15.500h6" />
          </svg>
        </Search>
        {apps.map(app => (
          <AppButton key={app.name} aria-label={app.name} $open={app.open} $current={app.current}>
            {app.icon}
          </AppButton>
        ))}
      </Taskbar>
    </Pane>
  )
}

function App() {
  return (
    <Desktop>
      <GlobalStyle />
      {books.map(book => <ExcelPane key={book.id} book={book} />)}
    </Desktop>
  )
}

export default App
